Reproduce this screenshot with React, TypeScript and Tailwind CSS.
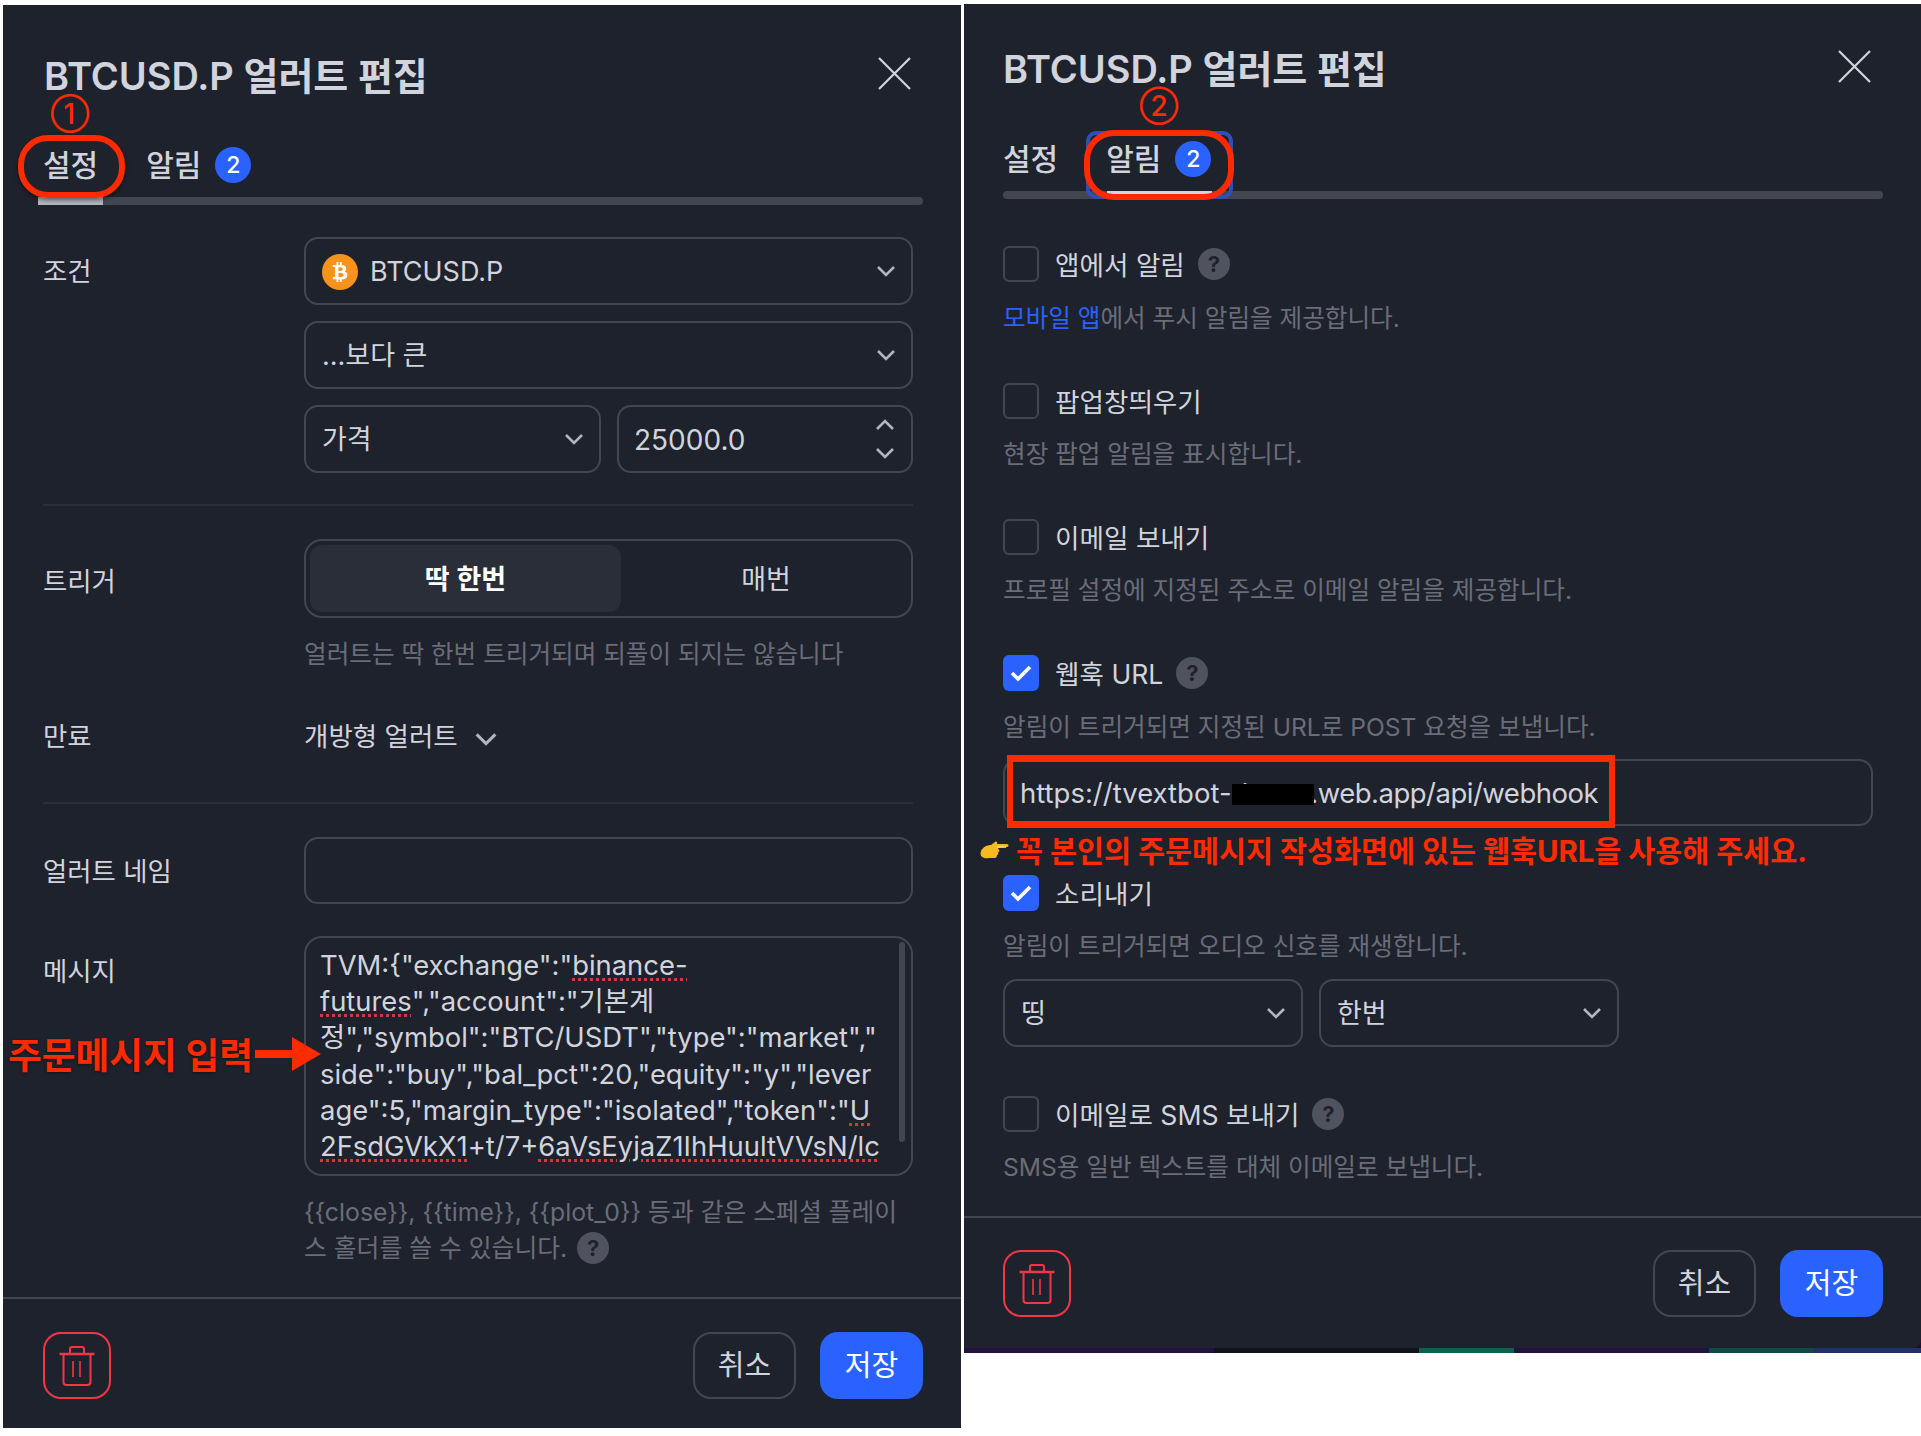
import React from "react";
import { FaBtc } from "react-icons/fa";

const font = { fontFamily: '"Inter", "Noto Sans CJK KR", sans-serif' };

function Chevron({ className = "" }: { className?: string }) {
  return (
    <svg width="20" height="12" viewBox="0 0 20 12" fill="none" className={className}>
      <path d="M2 2l8 8 8-8" stroke="#b2b5be" strokeWidth="2.6" />
    </svg>
  );
}

function Help({ className = "" }: { className?: string }) {
  return (
    <span className={`inline-flex items-center justify-center w-[32px] h-[32px] rounded-full bg-[#50535e] text-[#1e222d] text-[22px] font-bold leading-none shrink-0 ${className}`}>
      ?
    </span>
  );
}

function Select({ children, className = "" }: { children: React.ReactNode; className?: string }) {
  return (
    <div className={`flex items-center justify-between h-[68px] border-2 border-[#434651] rounded-[14px] pl-[16px] pr-[15px] text-[27px] text-[#d1d4dc] ${className}`}>
      <div className="flex items-center pt-[2px]">{children}</div>
      <Chevron />
    </div>
  );
}

function Trash() {
  return (
    <svg width="36" height="40" viewBox="0 0 36 40" fill="none" stroke="#f23645" strokeWidth="2">
      <path d="M0.5 8h35" strokeWidth="2.4" />
      <path d="M11 8V3a2 2 0 0 1 2-2h10a2 2 0 0 1 2 2v5" />
      <path d="M4.5 8v28a3 3 0 0 0 3 3h21a3 3 0 0 0 3-3V8" />
      <path d="M14 15v16M21 15v16" strokeWidth="1.6" />
    </svg>
  );
}

function Footer({ className }: { className: string }) {
  return (
    <div className={`flex items-center justify-between h-[67px] ${className}`}>
      <button className="w-[68px] h-[67px] border-2 border-[#f23645] rounded-[18px] flex items-center justify-center">
        <Trash />
      </button>
      <div className="flex gap-[24px]">
        <button className="w-[103px] h-[67px] pt-[1px] border-2 border-[#434651] rounded-[18px] text-[29px] text-[#d1d4dc]">취소</button>
        <button className="w-[103px] h-[67px] pt-[1px] bg-[#2962ff] rounded-[18px] text-[29px] text-white">저장</button>
      </div>
    </div>
  );
}

function Close() {
  return (
    <svg width="33" height="33" viewBox="0 0 33 33" fill="none" stroke="#d1d4dc" strokeWidth="2.2" className="-mt-[3px]">
      <path d="M1 1l31 31M32 1L1 32" />
    </svg>
  );
}

function Badge() {
  return (
    <span className="ml-[14px] w-[36px] h-[36px] rounded-full bg-[#2962ff] text-white text-[23px] flex items-center justify-center">2</span>
  );
}

function Check({ on }: { on?: boolean }) {
  return on ? (
    <span className="w-[36px] h-[36px] rounded-[6px] bg-[#2962ff] flex items-center justify-center shrink-0">
      <svg width="22" height="18" viewBox="0 0 22 18" fill="none">
        <path d="M2 9l6 6L20 3" stroke="#fff" strokeWidth="3.6" />
      </svg>
    </span>
  ) : (
    <span className="w-[36px] h-[36px] rounded-[6px] border-2 border-[#434651] shrink-0" />
  );
}

function Row({ on, label, help }: { on?: boolean; label: string; help?: boolean }) {
  return (
    <div className="flex items-center h-[36px]">
      <Check on={on} />
      <span className="ml-[16px] pt-[1px] text-[26.6px] text-[#d1d4dc] leading-[36px]">{label}</span>
      {help && <Help className="ml-[13px]" />}
    </div>
  );
}

function Desc({ children, className = "" }: { children: React.ReactNode; className?: string }) {
  return <div className={`h-[36px] pt-[1px] leading-[36px] text-[24.6px] text-[#6a6d78] whitespace-nowrap ${className}`}>{children}</div>;
}

function Sp({ children }: { children: React.ReactNode }) {
  return <span className="underline decoration-dotted decoration-[#d43a35] decoration-[3px] underline-offset-[3px]">{children}</span>;
}

function LeftPanel() {
  return (
    <div className="relative w-[958px] h-[1423px] mt-[5px] bg-[#1e222d] shrink-0 pt-[45px]">
      <div className="flex items-center justify-between h-[50px] pl-[41px] pr-[50px]">
        <span className="pt-[2px] text-[38px] font-semibold text-[#d1d4dc] whitespace-nowrap">BTCUSD.P 얼러트 편집</span>
        <Close />
      </div>
      <div className="flex items-center h-[36px] mt-[47px] pl-[40px] text-[30px] font-medium text-[#d1d4dc]">
        <span>설정</span>
        <span className="ml-[48px]">알림</span>
        <Badge />
      </div>
      <div className="relative h-[8px] mt-[14px] ml-[35px] mr-[38px] bg-[#434651] rounded-r-[4px]">
        <div className="w-[65px] h-[8px] bg-[#b2b5be]" />
      </div>

      <div className="ml-[40px] mr-[48px]">
        <div className="grid grid-cols-[261px_1fr] mt-[32px]">
          <div className="text-[26.4px] text-[#d1d4dc] leading-[36px] pt-[16px]">조건</div>
          <div className="flex flex-col gap-[16px]">
            <Select>
              <span className="w-[36px] h-[36px] rounded-full bg-[#f7931a] flex items-center justify-center mr-[12px]">
                <FaBtc className="text-white text-[20px]" />
              </span>
              BTCUSD.P
            </Select>
            <Select>...보다 큰</Select>
            <div className="flex gap-[16px]">
              <Select className="w-[297px]">가격</Select>
              <div className="flex items-center justify-between flex-1 h-[68px] border-2 border-[#434651] rounded-[14px] pl-[15px] pr-[16px] text-[28px] text-[#d1d4dc]">
                <span className="pt-[2px]">25000.0</span>
                <div className="flex flex-col gap-[16px]">
                  <Chevron className="rotate-180" />
                  <Chevron />
                </div>
              </div>
            </div>
          </div>
        </div>
        <div className="h-[2px] mt-[31px] bg-[#2a2e39]" />

        <div className="grid grid-cols-[261px_1fr] mt-[33px]">
          <div className="text-[26.4px] text-[#d1d4dc] leading-[36px] pt-[24px]">트리거</div>
          <div>
            <div className="flex h-[79px] border-2 border-[#434651] rounded-[18px] p-[4px] text-[27px]">
              <div className="w-[311px] pt-[3px] bg-[#2a2e39] rounded-[12px] flex items-center justify-center font-semibold text-white">딱 한번</div>
              <div className="flex-1 pt-[3px] flex items-center justify-center text-[#d1d4dc] pl-[4px]">매번</div>
            </div>
            <Desc className="mt-[17px]">얼러트는 딱 한번 트리거되며 되풀이 되지는 않습니다</Desc>
          </div>
        </div>

        <div className="grid grid-cols-[261px_1fr] mt-[46px] h-[36px] items-center">
          <div className="text-[26.4px] text-[#d1d4dc]">만료</div>
          <div className="flex items-center text-[26.5px] text-[#d1d4dc]">
            개방형 얼러트
            <Chevron className="ml-[16px] mt-[4px] w-[24px] h-[14px]" />
          </div>
        </div>
        <div className="h-[2px] mt-[49px] bg-[#2a2e39]" />

        <div className="grid grid-cols-[261px_1fr] mt-[33px] items-center">
          <div className="text-[26.4px] pt-[2px] text-[#d1d4dc]">얼러트 네임</div>
          <div className="h-[67px] border-2 border-[#434651] rounded-[14px]" />
        </div>

        <div className="grid grid-cols-[261px_1fr] mt-[32px]">
          <div className="text-[26.4px] text-[#d1d4dc] leading-[36px] pt-[17px]">메시지</div>
          <div>
            <div className="relative h-[240px] border-2 border-[#434651] rounded-[18px] pl-[14px] pt-[9px] overflow-hidden text-[27.4px] leading-[36.2px] text-[#d1d4dc] whitespace-nowrap">
              <div>TVM:{'{'}"exchange":"<Sp>binance-</Sp></div>
              <div><Sp>futures</Sp>","account":"기본계</div>
              <div>정","symbol":"BTC/USDT","type":"market","</div>
              <div>side":"buy","bal_pct":20,"equity":"y","lever</div>
              <div>age":5,"margin_type":"isolated","token":"<Sp>U</Sp></div>
              <div><Sp>2FsdGVkX1</Sp>+t/7+<Sp>6aVsEyjaZ1IhHuultVVsN/lc</Sp></div>
              <div className="absolute right-[6px] top-[4px] w-[6px] h-[200px] bg-[#434651] rounded-full" />
            </div>
            <div className="mt-[19px] text-[24.8px] leading-[35.5px] text-[#6a6d78]">
              <div className="whitespace-nowrap">{'{{close}}, {{time}}, {{plot_0}}'} 등과 같은 스페셜 플레이</div>
              <div className="flex items-center whitespace-nowrap">스 홀더를 쓸 수 있습니다.<Help className="ml-[10px]" /></div>
            </div>
          </div>
        </div>
      </div>

      <div className="h-[2px] mt-[31px] bg-[#434651]" />
      <Footer className="mt-[33px] ml-[40px] mr-[38px]" />

      {/* annotations */}
      <span className="absolute left-[45px] top-[87px] w-[44px] h-[44px] flex items-center justify-center text-[28px] font-medium leading-none text-[#ff2a00]">①</span>
      <div className="absolute left-[15px] top-[130px] w-[107px] h-[63px] border-[6px] border-[#ff2a00] rounded-[30px] shadow-[0_2px_4px_rgba(0,0,0,0.5)]" />
      <span className="absolute left-[5px] top-[1029px] text-[36.7px] leading-[44px] font-bold text-[#ff2a00] whitespace-nowrap [text-shadow:0_1px_3px_rgba(0,0,0,0.5)]">주문메시지 입력</span>
      <svg className="absolute left-[252px] top-[1032px]" width="66" height="34" viewBox="0 0 66 34">
        <path d="M0 13h37V0l29 17-29 17V21H0z" fill="#ff2a00" />
      </svg>
    </div>
  );
}

function Hand() {
  return (
    <svg width="30" height="26" viewBox="0 0 30 26">
      <path d="M2 12c2-4 6-6 10-6l4-3c1-1 3 0 2 2l10 0c2 0 2 3 0 3l-9 1 1 2c1 1 0 2-1 2 1 1 0 3-1 3 0 2-1 3-2 3l-6 0C5 20 0 18 2 12z" fill="#f6b91f" />
      <path d="M18 8l9 0" stroke="#fce27a" strokeWidth="1.5" />
    </svg>
  );
}

function RightPanel() {
  return (
    <div className="mt-[4px] w-[957px] bg-[#20102f] shrink-0">
      <div className="relative h-[1344px] bg-[#1e222d] pt-[39px] rounded-br-[8px]">
        <div className="flex items-center justify-between h-[50px] pl-[39px] pr-[50px]">
          <span className="pt-[2px] text-[38px] font-semibold text-[#d1d4dc] whitespace-nowrap">BTCUSD.P 얼러트 편집</span>
          <Close />
        </div>
        <div className="flex items-center h-[36px] mt-[48px] pl-[39px] text-[30px] font-medium text-[#d1d4dc]">
          <span>설정</span>
          <span className="ml-[48px]">알림</span>
          <Badge />
        </div>
        <div className="relative h-[8px] mt-[14px] ml-[39px] mr-[38px] bg-[#434651] rounded-[4px]">
          <div className="absolute left-[104px] top-0 w-[105px] h-[3px] bg-[#d1d4dc]" />
        </div>

        <div className="ml-[39px] mr-[38px] mt-[47px]">
          <Row label="앱에서 알림" help />
          <Desc className="mt-[17px]"><span className="text-[#2962ff]">모바일 앱</span>에서 푸시 알림을 제공합니다.</Desc>
          <div className="mt-[48px]"><Row label="팝업창띄우기" /></div>
          <Desc className="mt-[16px]">현장 팝업 알림을 표시합니다.</Desc>
          <div className="mt-[48px]"><Row label="이메일 보내기" /></div>
          <Desc className="mt-[16px]">프로필 설정에 지정된 주소로 이메일 알림을 제공합니다.</Desc>
          <div className="mt-[48px]"><Row on label="웹훅 URL" help /></div>
          <Desc className="mt-[17px]">알림이 트리거되면 지정된 URL로 POST 요청을 보냅니다.</Desc>
          <div className="relative h-[67px] mt-[15px] mr-[10px] border-2 border-[#434651] rounded-[14px] pl-[15px] pt-[3px] flex items-center text-[27.5px] text-[#d1d4dc] whitespace-pre">
            https://tvextbot-d&nbsp;&nbsp;&nbsp;&nbsp;&nbsp;&nbsp;&nbsp;&nbsp;<span className="tracking-[-0.5px]">.web.app/api/webhook</span>
          </div>
          <div className="flex items-center h-[36px] mt-[8px] -ml-[24px] text-[29.36px] font-bold text-[#ff2a00] whitespace-nowrap">
            <Hand />
            <span className="ml-[7px]">꼭 본인의 주문메시지 작성화면에 있는 웹훅URL을 사용해 주세요.</span>
          </div>
          <div className="mt-[5px]"><Row on label="소리내기" /></div>
          <Desc className="mt-[16px]">알림이 트리거되면 오디오 신호를 재생합니다.</Desc>
          <div className="flex gap-[16px] mt-[16px]">
            <Select className="w-[300px]">띵</Select>
            <Select className="w-[300px]">한번</Select>
          </div>
          <div className="mt-[49px]"><Row label="이메일로 SMS 보내기" help /></div>
          <Desc className="mt-[16px]">SMS용 일반 텍스트를 대체 이메일로 보냅니다.</Desc>
        </div>

        <div className="h-[2px] mt-[32px] bg-[#434651]" />
        <Footer className="mt-[32px] ml-[39px] mr-[38px]" />

        {/* annotations */}
        <span className="absolute left-[173px] top-[80px] w-[44px] h-[44px] flex items-center justify-center text-[28px] font-medium leading-none text-[#ff2a00]">②</span>
        <div className="absolute left-[122px] top-[127px] w-[147px] h-[68px] border-[4px] border-[#2f4fb5] rounded-[10px]" />
        <div className="absolute left-[120px] top-[126px] w-[150px] h-[70px] border-[6px] border-[#ff2a00] rounded-[30px]" />
        <div className="absolute left-[43px] top-[751px] w-[608px] h-[73px] border-x-[6px] border-y-[7px] border-[#ff2a00]" />
        <div className="absolute left-[268px] top-[780px] w-[82px] h-[21px] bg-black" />
      </div>
      <div className="flex h-[5px]">
        <div className="w-[250px] bg-[#22123f]" />
        <div className="w-[205px] bg-[#10131d]" />
        <div className="w-[95px] bg-[#0f5f52]" />
        <div className="w-[195px] bg-[#22123f]" />
        <div className="w-[105px] bg-[#0f4a48]" />
        <div className="flex-1 bg-[#22306a]" />
      </div>
    </div>
  );
}

export default function App() {
  return (
    <div className="flex w-[1921px] h-[1436px] bg-white overflow-hidden items-start" style={font}>
      <div className="w-[3px] shrink-0" />
      <LeftPanel />
      <div className="w-[3px] shrink-0" />
      <RightPanel />
    </div>
  );
}
